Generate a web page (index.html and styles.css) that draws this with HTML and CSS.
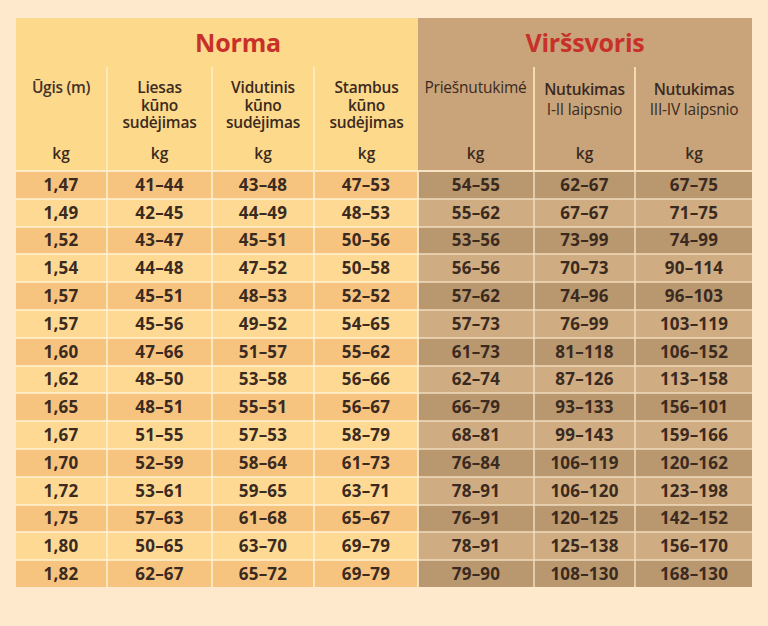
FILE: index.html
```html
<!DOCTYPE html>
<html lang="lt">
<head>
<meta charset="utf-8">
<title>Svorio lentelė</title>
<link rel="stylesheet" href="styles.css">
</head>
<body>
<table class="chart">
  <colgroup>
    <col class="c1"><col class="c2"><col class="c3"><col class="c4">
    <col class="c5"><col class="c6"><col class="c7">
  </colgroup>
  <thead>
    <tr class="titles">
      <th colspan="4" class="norm title norma-title">Norma</th>
      <th colspan="3" class="over title">Viršsvoris</th>
    </tr>
    <tr class="labels">
      <th class="norm first"><div class="lab"><span class="name medium">Ūgis (m)</span><span class="kg">kg</span></div></th>
      <th class="norm"><div class="lab"><span class="name">Liesas<br>kūno<br>sudėjimas</span><span class="kg">kg</span></div></th>
      <th class="norm"><div class="lab"><span class="name">Vidutinis<br>kūno<br>sudėjimas</span><span class="kg">kg</span></div></th>
      <th class="norm"><div class="lab"><span class="name">Stambus<br>kūno<br>sudėjimas</span><span class="kg">kg</span></div></th>
      <th class="over first"><div class="lab"><span class="name regular">Priešnutukimé</span><span class="kg">kg</span></div></th>
      <th class="over"><div class="lab"><span class="name wide">Nutukimas<br><span class="regular">I-II laipsnio</span></span><span class="kg">kg</span></div></th>
      <th class="over"><div class="lab"><span class="name wide">Nutukimas<br><span class="regular">III-IV laipsnio</span></span><span class="kg">kg</span></div></th>
    </tr>
  </thead>
  <tbody>
    <tr class="dark"><td>1,47</td><td>41–44</td><td>43–48</td><td>47–53</td><td class="o">54–55</td><td class="o">62–67</td><td class="o">67–75</td></tr>
    <tr class="light"><td>1,49</td><td>42–45</td><td>44–49</td><td>48–53</td><td class="o">55–62</td><td class="o">67–67</td><td class="o">71–75</td></tr>
    <tr class="dark"><td>1,52</td><td>43–47</td><td>45–51</td><td>50–56</td><td class="o">53–56</td><td class="o">73–99</td><td class="o">74–99</td></tr>
    <tr class="light"><td>1,54</td><td>44–48</td><td>47–52</td><td>50–58</td><td class="o">56–56</td><td class="o">70–73</td><td class="o">90–114</td></tr>
    <tr class="dark"><td>1,57</td><td>45–51</td><td>48–53</td><td>52–52</td><td class="o">57–62</td><td class="o">74–96</td><td class="o">96–103</td></tr>
    <tr class="light"><td>1,57</td><td>45–56</td><td>49–52</td><td>54–65</td><td class="o">57–73</td><td class="o">76–99</td><td class="o">103–119</td></tr>
    <tr class="dark"><td>1,60</td><td>47–66</td><td>51–57</td><td>55–62</td><td class="o">61–73</td><td class="o">81–118</td><td class="o">106–152</td></tr>
    <tr class="light"><td>1,62</td><td>48–50</td><td>53–58</td><td>56–66</td><td class="o">62–74</td><td class="o">87–126</td><td class="o">113–158</td></tr>
    <tr class="dark"><td>1,65</td><td>48–51</td><td>55–51</td><td>56–67</td><td class="o">66–79</td><td class="o">93–133</td><td class="o">156–101</td></tr>
    <tr class="light"><td>1,67</td><td>51–55</td><td>57–53</td><td>58–79</td><td class="o">68–81</td><td class="o">99–143</td><td class="o">159–166</td></tr>
    <tr class="dark"><td>1,70</td><td>52–59</td><td>58–64</td><td>61–73</td><td class="o">76–84</td><td class="o">106–119</td><td class="o">120–162</td></tr>
    <tr class="light"><td>1,72</td><td>53–61</td><td>59–65</td><td>63–71</td><td class="o">78–91</td><td class="o">106–120</td><td class="o">123–198</td></tr>
    <tr class="dark"><td>1,75</td><td>57–63</td><td>61–68</td><td>65–67</td><td class="o">76–91</td><td class="o">120–125</td><td class="o">142–152</td></tr>
    <tr class="light"><td>1,80</td><td>50–65</td><td>63–70</td><td>69–79</td><td class="o">78–91</td><td class="o">125–138</td><td class="o">156–170</td></tr>
    <tr class="dark"><td>1,82</td><td>62–67</td><td>65–72</td><td>69–79</td><td class="o">79–90</td><td class="o">108–130</td><td class="o">168–130</td></tr>
  </tbody>
</table>
</body>
</html>
```

FILE: styles.css
```css
html, body {
  margin: 0;
  padding: 0;
}

body {
  background: #fee9cc;
  padding: 18px 0 0 16px;
  font-family: "Open Sans", "Noto Sans", "DejaVu Sans", sans-serif;
  color: #3b2a20;
}

.chart {
  width: 736px;
  table-layout: fixed;
  border-collapse: collapse;
  border-spacing: 0;
}

.c1 { width: 91px; }
.c2 { width: 105px; }
.c3 { width: 102px; }
.c4 { width: 104px; }
.c5 { width: 116px; }
.c6 { width: 101px; }
.c7 { width: 117px; }

.norm { background: #fdd98b; }
.over { background: #c9a47b; }

.title {
  height: 49px;
  padding: 0;
  font-size: 25px;
  font-weight: 700;
  color: #c8302a;
  text-align: center;
  vertical-align: middle;
  line-height: 49px;
  letter-spacing: -0.2px;
}

.norma-title {
  padding-left: 42px;
}

.labels th {
  height: 103px;
  padding: 0;
  vertical-align: top;
  border-left: 2px solid rgba(255, 238, 200, 0.75);
  border-bottom: 2px solid rgba(255, 240, 210, 0.85);
}

.labels th.first {
  border-left: none;
}

.lab {
  height: 103px;
  box-sizing: border-box;
  padding: 12px 0 8px;
  display: flex;
  flex-direction: column;
  justify-content: space-between;
  align-items: center;
  text-align: center;
}

.name {
  font-size: 15.5px;
  line-height: 17.5px;
  font-weight: 600;
  letter-spacing: -0.2px;
}

.name.wide {
  line-height: 20px;
}

.medium {
  font-size: 15.5px;
  font-weight: 600;
  letter-spacing: -0.3px;
  color: #45332a;
}

.regular {
  font-weight: 400;
}

.kg {
  font-size: 15.5px;
  line-height: 17px;
  font-weight: 600;
}

tbody td {
  height: 25.8px;
  padding: 0;
  text-align: center;
  vertical-align: middle;
  font-size: 17px;
  font-weight: 700;
  line-height: 20px;
  letter-spacing: 0.2px;
  border: 2px solid rgba(255, 240, 210, 0.8);
  border-top: none;
}

tbody td:first-child {
  border-left: none;
}

tbody td:last-child {
  border-right: none;
}

tbody tr:last-child td {
  border-bottom: none;
}

tr.dark td { background: #f6c47f; }
tr.light td { background: #fdd993; }
tr.dark td.o { background: #b9986f; border-color: rgba(240, 220, 190, 0.75); }
tr.light td.o { background: #cfac81; border-color: rgba(240, 220, 190, 0.75); }
```
